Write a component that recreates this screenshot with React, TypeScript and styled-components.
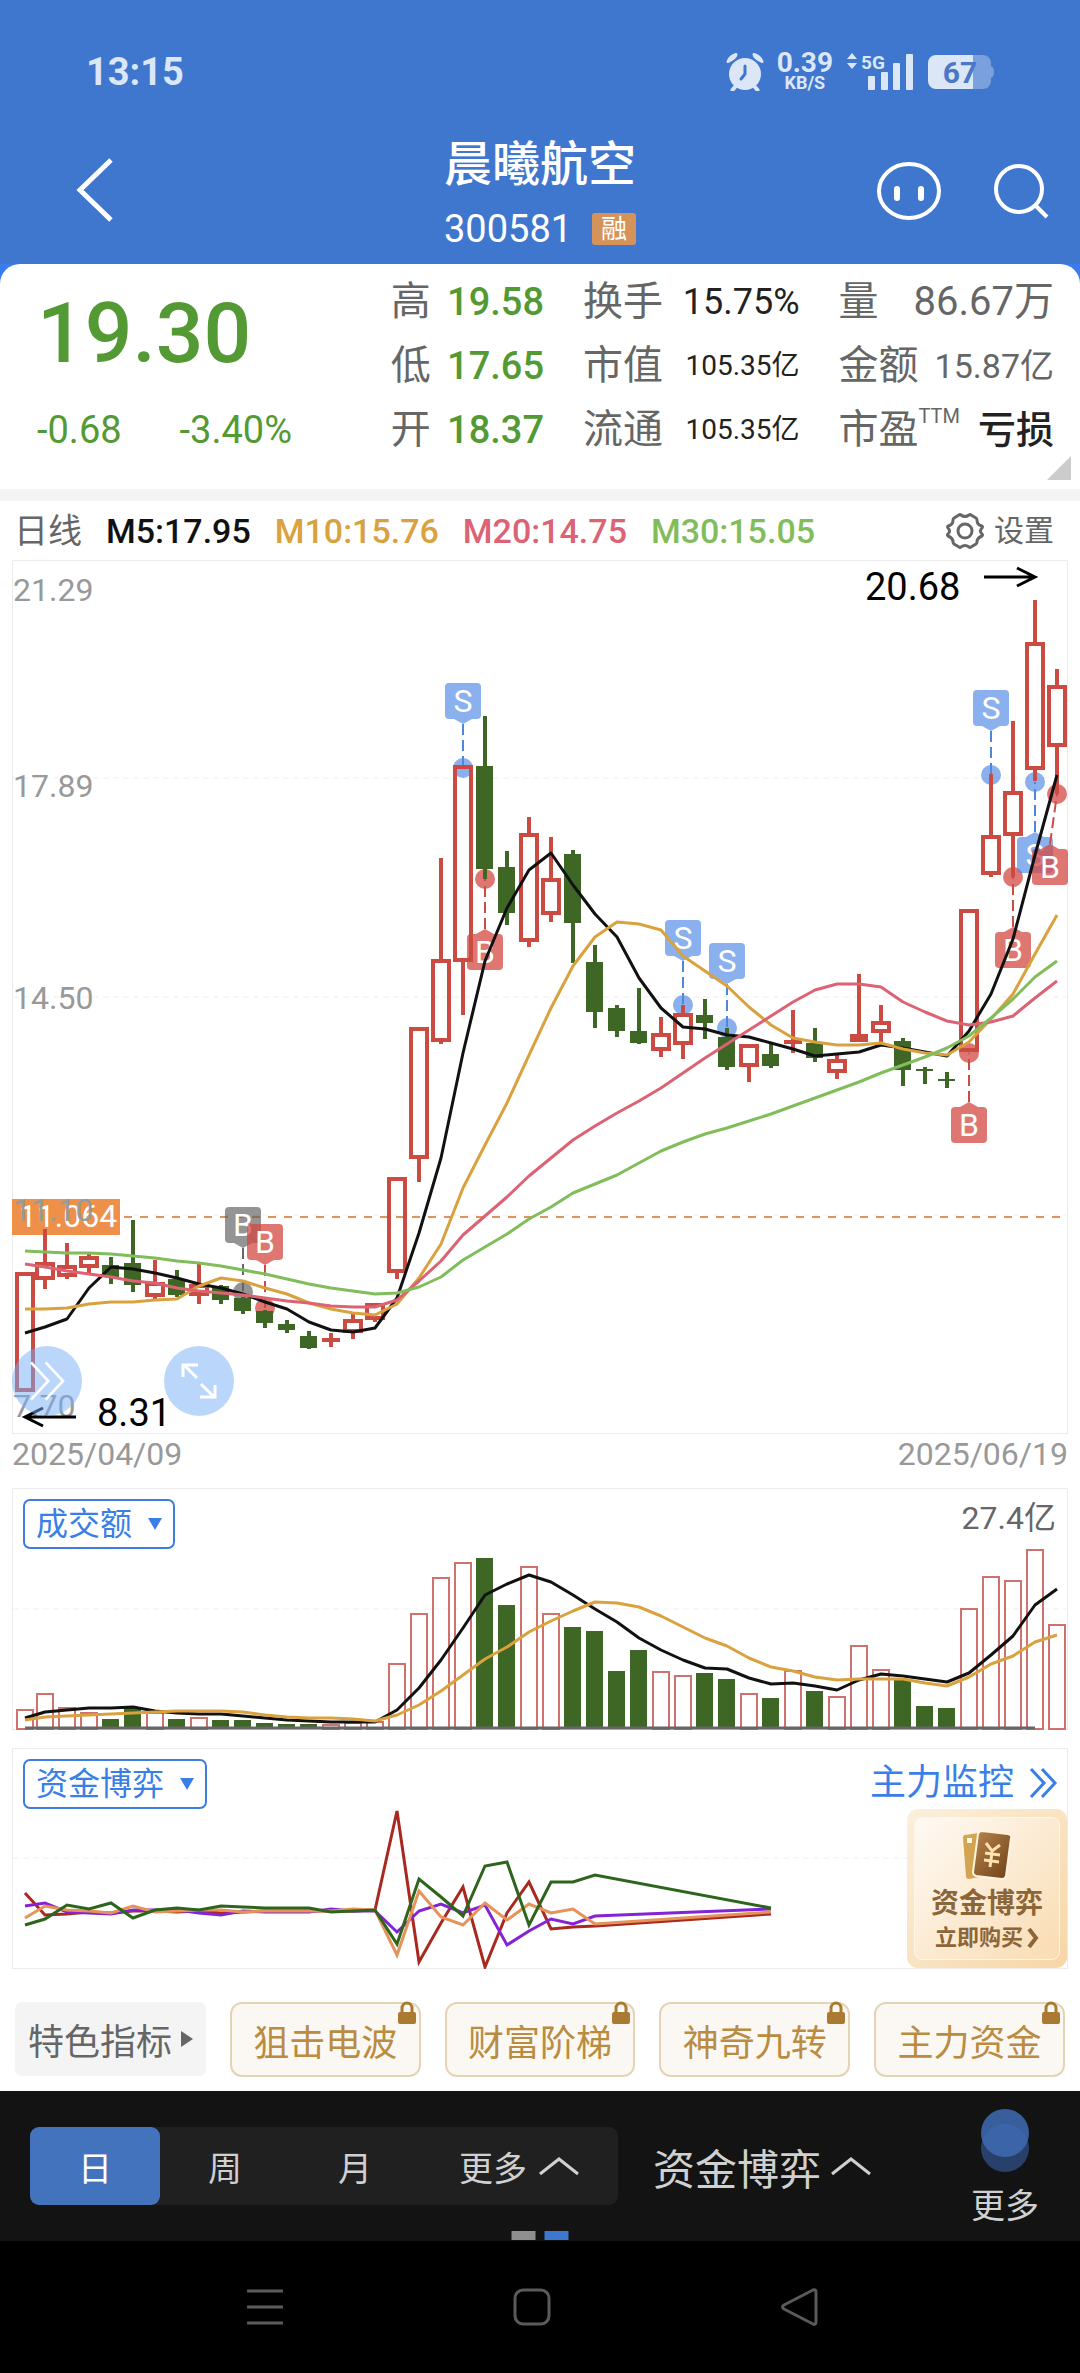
import React from "react";
import styled, { createGlobalStyle } from "styled-components";

const GlobalStyle = createGlobalStyle`
  *, *::before, *::after { box-sizing: border-box; }
  body {
    margin: 0;
    background: #000;
    font-family: Roboto, "Noto Sans CJK SC", sans-serif;
    -webkit-font-smoothing: antialiased;
  }
  button, select {
    font-family: inherit;
    margin: 0;
    padding: 0;
    border: 0;
    background: none;
    color: inherit;
    cursor: pointer;
  }
  dl, dd, dt, h1, p { margin: 0; font-weight: 400; }
  a { text-decoration: none; color: inherit; }
  svg { display: block; flex: none; }
`;

/* ---------- data ---------- */

type Candle = [kind: "R" | "G", high: number, top: number, bottom: number, low: number];

const candles: Candle[] = [
  ["R", 1272, 1272, 1392, 1392], ["R", 1229, 1262, 1280, 1289], ["R", 1243, 1265, 1277, 1279],
  ["R", 1254, 1256, 1268, 1274], ["G", 1257, 1265, 1277, 1284], ["G", 1220, 1263, 1285, 1292],
  ["R", 1260, 1282, 1297, 1299], ["G", 1270, 1279, 1295, 1297], ["R", 1264, 1284, 1296, 1304],
  ["G", 1285, 1286, 1300, 1304], ["G", 1297, 1298, 1311, 1314], ["G", 1310, 1311, 1323, 1328],
  ["G", 1320, 1324, 1330, 1333], ["G", 1331, 1336, 1348, 1349], ["R", 1333, 1338, 1342, 1347],
  ["R", 1313, 1319, 1333, 1339], ["R", 1303, 1303, 1320, 1322], ["R", 1177, 1177, 1273, 1279],
  ["R", 1027, 1027, 1159, 1182], ["R", 858, 959, 1042, 1044], ["R", 765, 765, 962, 1015],
  ["G", 716, 766, 869, 879], ["G", 851, 867, 913, 925], ["R", 817, 833, 942, 947],
  ["R", 837, 878, 915, 922], ["G", 850, 854, 923, 963], ["G", 945, 962, 1012, 1028],
  ["G", 1005, 1008, 1031, 1037], ["G", 988, 1031, 1043, 1044], ["R", 1017, 1033, 1051, 1057],
  ["R", 1005, 1013, 1045, 1059], ["G", 999, 1015, 1023, 1039], ["G", 1028, 1037, 1067, 1070],
  ["R", 1044, 1044, 1067, 1082], ["G", 1044, 1054, 1066, 1068], ["R", 1010, 1040, 1044, 1053],
  ["G", 1028, 1043, 1058, 1062], ["R", 1053, 1059, 1073, 1079], ["R", 974, 1034, 1042, 1042],
  ["R", 1005, 1021, 1033, 1042], ["G", 1038, 1041, 1070, 1086], ["G", 1067, 1069, 1071, 1084],
  ["G", 1072, 1079, 1081, 1088], ["R", 909, 909, 1052, 1052], ["R", 774, 835, 875, 877],
  ["R", 721, 791, 836, 877], ["R", 600, 642, 770, 781], ["R", 669, 685, 747, 794],
];

const ma5 = [1333, 1327, 1319, 1288, 1267, 1269, 1273, 1278, 1284, 1288, 1294, 1302, 1309, 1322, 1330, 1332, 1328, 1298, 1233, 1158, 1053, 961, 908, 870, 853, 885, 914, 937, 978, 1008, 1027, 1029, 1035, 1037, 1043, 1049, 1056, 1054, 1052, 1045, 1048, 1052, 1056, 1031, 994, 939, 855, 775];
const ma10 = [1309, 1309, 1308, 1304, 1302, 1302, 1300, 1299, 1286, 1278, 1281, 1288, 1294, 1303, 1309, 1313, 1315, 1304, 1278, 1244, 1188, 1145, 1103, 1055, 1008, 966, 937, 922, 924, 930, 956, 971, 986, 1007, 1025, 1038, 1042, 1045, 1045, 1043, 1049, 1053, 1055, 1042, 1019, 994, 954, 915];
const ma20 = [1264, 1267, 1271, 1274, 1277, 1281, 1283, 1288, 1291, 1293, 1295, 1298, 1301, 1303, 1306, 1307, 1307, 1300, 1281, 1261, 1235, 1216, 1197, 1176, 1158, 1140, 1126, 1113, 1101, 1088, 1073, 1058, 1044, 1030, 1016, 1002, 990, 984, 984, 987, 1002, 1012, 1021, 1025, 1022, 1016, 998, 981];
const ma30 = [1251, 1252, 1253, 1253, 1254, 1256, 1258, 1261, 1263, 1266, 1270, 1274, 1279, 1284, 1288, 1291, 1294, 1293, 1287, 1277, 1260, 1247, 1234, 1219, 1207, 1193, 1184, 1175, 1163, 1151, 1142, 1134, 1128, 1121, 1114, 1106, 1098, 1090, 1082, 1073, 1065, 1057, 1048, 1036, 1018, 999, 977, 961];

const turnover = [1709, 1693, 1707, 1712, 1719, 1707, 1712, 1719, 1717, 1720, 1720, 1723, 1724, 1724, 1724, 1722, 1721, 1663, 1613, 1577, 1562, 1558, 1605, 1566, 1613, 1627, 1631, 1671, 1650, 1671, 1675, 1673, 1679, 1693, 1698, 1670, 1691, 1696, 1645, 1669, 1679, 1706, 1708, 1608, 1576, 1580, 1549, 1624];
const turnover5 = [1718, 1712, 1710, 1708, 1708, 1707, 1711, 1713, 1714, 1714, 1716, 1718, 1720, 1721, 1722, 1722, 1722, 1710, 1688, 1660, 1628, 1595, 1584, 1575, 1582, 1595, 1609, 1622, 1638, 1650, 1660, 1668, 1669, 1678, 1684, 1683, 1686, 1690, 1680, 1674, 1676, 1679, 1682, 1673, 1655, 1636, 1605, 1589];
const turnover10 = [1720, 1717, 1716, 1715, 1714, 1713, 1712, 1711, 1711, 1711, 1712, 1715, 1717, 1718, 1718, 1719, 1721, 1715, 1705, 1691, 1675, 1659, 1647, 1632, 1621, 1611, 1602, 1603, 1607, 1616, 1627, 1638, 1646, 1658, 1667, 1671, 1677, 1680, 1679, 1679, 1679, 1683, 1686, 1677, 1664, 1656, 1642, 1635];

const fundLines = [
  { color: "#a9281f", end: 1914, ys: [1893, 1915, 1914, 1912, 1913, 1911, 1911, 1912, 1911, 1913, 1912, 1911, 1911, 1911, 1911, 1911, 1910, 1811, 1962, 1923, 1887, 1967, 1913, 1882, 1929, 1927, 1926] },
  { color: "#8423d6", end: 1909, ys: [1906, 1903, 1912, 1913, 1914, 1910, 1910, 1910, 1913, 1915, 1911, 1912, 1912, 1912, 1909, 1911, 1911, 1932, 1911, 1904, 1913, 1905, 1945, 1931, 1919, 1924, 1916] },
  { color: "#e6935a", end: 1912, ys: [1918, 1906, 1910, 1911, 1913, 1906, 1912, 1911, 1910, 1910, 1912, 1911, 1911, 1911, 1911, 1909, 1910, 1955, 1891, 1917, 1925, 1903, 1920, 1904, 1913, 1909, 1924] },
  { color: "#2d651d", end: 1908, ys: [1925, 1919, 1905, 1909, 1903, 1918, 1910, 1908, 1910, 1906, 1907, 1908, 1908, 1908, 1912, 1911, 1910, 1944, 1879, 1897, 1916, 1866, 1862, 1925, 1882, 1882, 1875] },
];

type Mark = { letter: "S" | "B"; tone: "blue" | "red" | "grey"; x: number; dot: number; box: number; boxX?: number };

const marks: Mark[] = [
  { letter: "S", tone: "blue", x: 463, dot: 768, box: 683 },
  { letter: "B", tone: "red", x: 485, dot: 879, box: 934 },
  { letter: "S", tone: "blue", x: 683, dot: 1005, box: 920 },
  { letter: "S", tone: "blue", x: 727, dot: 1028, box: 943 },
  { letter: "S", tone: "blue", x: 991, dot: 775, box: 690 },
  { letter: "B", tone: "red", x: 969, dot: 1053, box: 1107 },
  { letter: "B", tone: "red", x: 1013, dot: 877, box: 932 },
  { letter: "S", tone: "blue", x: 1035, dot: 782, box: 837 },
  { letter: "B", tone: "red", x: 1057, dot: 794, box: 849, boxX: 1050 },
  { letter: "B", tone: "grey", x: 243, dot: 1292, box: 1207 },
  { letter: "B", tone: "red", x: 265, dot: 1308, box: 1224 },
];

const toneFill = {
  blue: "rgba(76,134,228,.65)",
  red: "rgba(211,72,65,.75)",
  grey: "rgba(90,90,90,.65)",
};
const toneLine = { blue: "#4f88da", red: "#cd4b43", grey: "#666" };

const RED = "#cb4a42";
const GREEN = "#3e6624";

const xAt = (i: number) => (i === 0 ? 25 : 23 + 22 * i);
const points = (ys: number[]) => ys.map((y, i) => `${xAt(i)},${y}`).join(" ");

/* ---------- header ---------- */

const Page = styled.div`
  min-width: 720px;
  background: #fff;
`;

const Header = styled.header`
  background: #3f76ce;
  color: #fff;
`;

const StatusBar = styled.div`
  display: flex;
  align-items: center;
  justify-content: space-between;
  height: 96px;
  padding: 48px 85px 0 86px;
  color: #dbe6f7;
`;

const Clock = styled.time`
  font-size: 38px;
  line-height: 48px;
  font-weight: 700;
`;

const StatusIcons = styled.div`
  display: flex;
  align-items: center;
  gap: 13px;
`;

const NetSpeed = styled.div`
  display: grid;
  justify-items: center;
  font-weight: 700;
`;

const NetValue = styled.span`
  font-size: 28px;
  line-height: 22px;
`;

const NetUnit = styled.span`
  font-size: 18px;
  line-height: 18px;
`;

const TopBar = styled.div`
  display: grid;
  grid-template-columns: 1fr auto 1fr;
  align-items: center;
  height: 168px;
  padding: 20px 30px 0 72px;
`;

const IconButton = styled.button`
  display: flex;
  align-items: center;
  justify-content: center;
  width: fit-content;
`;

const TitleBlock = styled.div`
  display: flex;
  flex-direction: column;
  gap: 18px;
  padding: 8px 42px 0 0;
`;

const Title = styled.h1`
  font-size: 48px;
  line-height: 52px;
  font-weight: 500;
  white-space: nowrap;
`;

const CodeLine = styled.div`
  display: flex;
  align-items: center;
  justify-content: space-between;
  font-size: 38px;
  line-height: 40px;
`;

const MarginTag = styled.span`
  width: 44px;
  border-radius: 3px;
  background: #d59359;
  font-size: 26px;
  line-height: 32px;
  text-align: center;
`;

const TopActions = styled.div`
  display: flex;
  justify-content: flex-end;
  align-items: center;
  gap: 50px;
`;

/* ---------- quote ---------- */

const SheetEdge = styled.div`
  background: #3a7cf0;
`;

const Quote = styled.section`
  position: relative;
  display: grid;
  grid-template-columns: 351fr 153fr 216fr 215fr;
  column-gap: 39px;
  padding: 6px 26px 27px 0;
  border-radius: 20px 20px 0 0;
  background: #fff;
`;

const PriceBox = styled.div`
  padding-left: 37px;
  color: #539a34;
`;

const Price = styled.p`
  font-size: 84px;
  line-height: 128px;
  font-weight: 500;
`;

const Change = styled.p`
  display: flex;
  gap: 58px;
  font-size: 38px;
  line-height: 64px;
`;

const Stats = styled.dl`
  display: grid;
  grid-auto-rows: 64px;
`;

const Stat = styled.div`
  display: flex;
  align-items: center;
  justify-content: space-between;
  white-space: nowrap;
`;

const StatName = styled.dt`
  display: flex;
  font-size: 40px;
  line-height: 64px;
  color: #666;
`;

const Sup = styled.span`
  font-size: 20px;
  line-height: 36px;
`;

const StatValue = styled.dd<{ $tone?: string; $size?: number; $bold?: boolean }>`
  font-size: ${(p) => p.$size ?? 38}px;
  line-height: 64px;
  font-weight: ${(p) => (p.$bold ? 500 : 400)};
  color: ${(p) => p.$tone ?? "#666"};
`;

const Corner = styled.span`
  position: absolute;
  right: 9px;
  bottom: 9px;
  border-style: solid;
  border-width: 0 0 24px 24px;
  border-color: transparent transparent #ccc transparent;
`;

/* ---------- charts ---------- */

const Legend = styled.div`
  display: flex;
  align-items: center;
  gap: 24px;
  height: 71px;
  padding: 0 26px 0 14px;
  border-top: 12px solid #f4f4f4;
  font-size: 34px;
  line-height: 58px;
  white-space: nowrap;
`;

const LegendItem = styled.span<{ $color: string; $plain?: boolean }>`
  color: ${(p) => p.$color};
  font-weight: ${(p) => (p.$plain ? 400 : 500)};
`;

const Settings = styled.button`
  display: flex;
  align-items: center;
  gap: 10px;
  margin-left: auto;
  font-size: 30px;
  line-height: 58px;
  color: #666;
`;

const ChartBox = styled.section<{ $after?: number }>`
  position: relative;
  margin-bottom: ${(p) => p.$after ?? 0}px;

  > svg {
    width: 100%;
    height: auto;
  }
`;

const RoundButton = styled.button<{ $left: string }>`
  position: absolute;
  left: ${(p) => p.$left};
  bottom: 18px;
  display: flex;
  align-items: center;
  justify-content: center;
  width: 70px;
  height: 70px;
  border-radius: 50%;
  background: rgba(118, 175, 247, 0.5);
`;

const Dates = styled.div`
  display: flex;
  justify-content: space-between;
  height: 54px;
  padding: 0 12px;
  font-size: 32px;
  line-height: 40px;
  color: #999;
`;

const Picker = styled.label`
  position: absolute;
  left: 23px;
  top: 11px;
  display: block;

  select {
    appearance: none;
    height: 50px;
    padding: 0 40px 0 11px;
    border: 2px solid #3d7ce0;
    border-radius: 7px;
    font-size: 32px;
    line-height: 46px;
    color: #3a7fe8;
  }

  &::after {
    content: "";
    position: absolute;
    right: 13px;
    top: 19px;
    border-style: solid;
    border-width: 12px 7px 0;
    border-color: #3a7fe8 transparent transparent;
    pointer-events: none;
  }
`;

const MaxTurnover = styled.span`
  position: absolute;
  right: 24px;
  top: 8px;
  font-size: 32px;
  line-height: 44px;
  color: #666;
`;

const MonitorLink = styled.a`
  position: absolute;
  right: 22px;
  top: 11px;
  display: flex;
  align-items: center;
  gap: 14px;
  font-size: 36px;
  line-height: 48px;
  color: #3a7fe8;
`;

const BuyCard = styled.a`
  position: absolute;
  right: 13px;
  bottom: 1px;
  display: flex;
  width: 160px;
  height: 159px;
  padding: 8px 7px;
  border-radius: 11px;
  background: linear-gradient(135deg, #fbf0dc, #f7d6a6);
`;

const BuyInner = styled.span`
  display: flex;
  flex: 1;
  flex-direction: column;
  align-items: center;
  padding-top: 12px;
  border: 1px solid #fff6e8;
  border-radius: 8px;
  background: linear-gradient(135deg, #fffaf4, #f9dcb2);
  color: #8c6538;
  font-weight: 700;
`;

const BuyName = styled.span`
  font-size: 28px;
  line-height: 48px;
`;

const BuyNow = styled.span`
  display: flex;
  align-items: center;
  gap: 4px;
  font-size: 22px;
  line-height: 20px;
`;

/* ---------- chips ---------- */

const Chips = styled.nav`
  display: grid;
  grid-template-columns: repeat(5, 1fr);
  gap: 24px;
  padding: 33px 15px 14px;
`;

const ChipLead = styled.button`
  display: flex;
  align-items: center;
  justify-content: center;
  gap: 9px;
  height: 74px;
  border-radius: 7px;
  background: #f4f4f4;
  font-size: 36px;
  white-space: nowrap;
  color: #666;
`;

const Chip = styled.button`
  position: relative;
  height: 75px;
  border: 2px solid #e5d4b4;
  border-radius: 12px;
  background: #fbf8f3;
  font-size: 36px;
  white-space: nowrap;
  color: #b98c41;

  svg {
    position: absolute;
    right: 3px;
    top: -3px;
  }
`;

/* ---------- bottom ---------- */

const BottomBar = styled.div`
  position: relative;
  display: flex;
  align-items: center;
  height: 150px;
  padding: 0 41px 0 30px;
  background: #131313;
  color: #d0d0d0;
`;

const Segments = styled.div`
  display: grid;
  grid-template-columns: 130fr 130fr 130fr 198fr;
  flex: 0 1 588px;
  height: 78px;
  border-radius: 9px;
  background: #202020;
`;

const Segment = styled.button<{ $active?: boolean }>`
  display: flex;
  align-items: center;
  justify-content: center;
  gap: 12px;
  border-radius: 9px;
  font-size: 34px;
  white-space: nowrap;
  background: ${(p) => (p.$active ? "#4273bc" : "none")};
  color: ${(p) => (p.$active ? "#fff" : "inherit")};
`;

const FundToggle = styled.button`
  display: flex;
  align-items: center;
  gap: 10px;
  margin-left: 35px;
  font-size: 42px;
  white-space: nowrap;
`;

const MoreButton = styled.button`
  display: flex;
  flex-direction: column;
  align-items: center;
  gap: 12px;
  margin-left: auto;
  padding-top: 4px;
  font-size: 34px;
  line-height: 44px;
`;

const Pager = styled.div`
  position: absolute;
  left: 50%;
  bottom: 1px;
  display: flex;
  gap: 9px;
  transform: translateX(-50%);
`;

const PagerDot = styled.span<{ $active?: boolean }>`
  width: 24px;
  height: 9px;
  background: ${(p) => (p.$active ? "#3d77ce" : "#8f8f8f")};
`;

const SystemNav = styled.nav`
  display: grid;
  grid-template-columns: repeat(3, 1fr);
  justify-items: center;
  align-items: center;
  height: 132px;
  padding: 0 147px 0 131px;
  background: #000;
`;

/* ---------- small drawings ---------- */

const AlarmIcon = () => (
  <svg width="38" height="38" viewBox="0 0 38 38">
    <circle cx="19" cy="21" r="16" fill="#dbe6f7" />
    <path d="M9 34l-2.500 3M29 34l2.500 3" stroke="#dbe6f7" strokeWidth="4" strokeLinecap="round" />
    <path d="M2 8.500q2-5 8-7q0 3-8 7zM36 8.500q-2-5-8-7q0 3 8 7z" stroke="#dbe6f7" strokeWidth="3" strokeLinejoin="round" fill="#dbe6f7" />
    <path d="M19 13v8l-4 5" stroke="#3f76ce" strokeWidth="3" strokeLinecap="round" strokeLinejoin="round" fill="none" />
  </svg>
);

const SignalIcon = () => (
  <svg width="68" height="44" viewBox="844 50 68 44" fill="#dbe6f7">
    <path d="M850 53l5 6h-10zM850 69l5-6h-10z" />
    <text x="859" y="69" fontSize="19" fontWeight="700">5G</text>
    <rect x="866" y="76" width="7" height="14" rx="1" />
    <rect x="879" y="72" width="7" height="18" rx="1" />
    <rect x="891" y="63" width="7" height="27" rx="1" />
    <rect x="904" y="54" width="7" height="36" rx="1" />
  </svg>
);

const BatteryIcon = () => (
  <svg width="68" height="38" viewBox="927 54 68 38">
    <path d="M973 56h10a8 8 0 0 1 8 8v3q3 1 3 6t-3 6v3a8 8 0 0 1-8 8h-10z" fill="#7ba0de" />
    <path d="M973 56v34h-37a8 8 0 0 1-8-8v-18a8 8 0 0 1 8-8z" fill="#dbe6f7" />
    <text x="960" y="84" fontSize="30" fontWeight="700" textAnchor="middle" fill="#4a78c8">67</text>
  </svg>
);

const Caret = () => (
  <svg width="40" height="20" viewBox="0 0 40 20" fill="none" stroke="currentColor" strokeWidth="3">
    <path d="M1 18L20 3l19 15" />
  </svg>
);

const GearIcon = () => (
  <svg width="38" height="38" viewBox="0 0 38 38" fill="none" stroke="#666" strokeWidth="3" strokeLinejoin="round">
    <path d="M13 3q1-1 2 0q4 3 8 0q1-1 2 0l5 3q1 1 1 2q0 5 5 6q1 1 0 2q-3 3 0 6q1 1 0 2q-5 2-5 6q0 1-1 2l-5 3q-1 1-2 0q-4-3-8 0q-1 1-2 0l-5-3q-1-1-1-2q0-4-5-6q-1-1 0-2q3-3 0-6q-1-1 0-2q5-1 5-6q0-1 1-2z" />
    <circle cx="19" cy="19" r="7" />
  </svg>
);

const LockIcon = () => (
  <svg width="18" height="24" viewBox="0 0 18 24">
    <path d="M4 12V7a5 5 0 0 1 10 0v5" fill="none" stroke="#aa7a33" strokeWidth="3" />
    <rect y="11" width="18" height="12" rx="2" fill="#aa7a33" />
  </svg>
);

const VoucherIcon = () => (
  <svg width="50" height="50" viewBox="0 0 50 50">
    <defs>
      <linearGradient id="card" x1="0" y1="0" x2="1" y2="1">
        <stop offset="0" stopColor="#b98650" />
        <stop offset="1" stopColor="#6c3f15" />
      </linearGradient>
    </defs>
    <path d="M3 5l14-2v44l-10 2q-3 0-3-3L1 8q0-3 2-3z" fill="#d3a552" />
    <rect x="5" y="8" width="5" height="5" fill="#fff8ec" />
    <path d="M20 1l26 3q4 1 3 4l-5 38q-1 3-4 3l-26-3q-3-1-3-4l5-38q1-3 4-3z" fill="url(#card)" stroke="#fff3e0" strokeWidth="2" />
    <path d="M24 13l6 8 8-6M23 23l15 2M22 30l15 2M30 22l-2 15" fill="none" stroke="#ffe3ae" strokeWidth="3" />
  </svg>
);

const Chevrons = ({ size, width, color }: { size: number; width: number; color: string }) => (
  <svg width={size} height={size} viewBox="0 0 30 30" fill="none" stroke={color} strokeWidth={width}>
    <path d="M3 1l13 14L3 29M14 1l13 14L14 29" />
  </svg>
);

/* ---------- chart parts ---------- */

const TradeMark = ({ letter, tone, x, dot, box, boxX = x }: Mark) => {
  const above = box < dot;
  const edge = above ? box + 36 : box;
  const tip = above ? edge + 5 : edge - 5;
  return (
    <g>
      <circle cx={x} cy={dot} r="10" fill={toneFill[tone]} />
      <line x1={boxX} y1={tip} x2={x} y2={dot} stroke={toneLine[tone]} strokeWidth="2" strokeDasharray="11 5" />
      <rect x={boxX - 18} y={box} width="36" height="36" rx="4" fill={toneFill[tone]} />
      <path d={`M${boxX - 9} ${edge}L${boxX} ${tip}L${boxX + 9} ${edge}z`} fill={toneFill[tone]} />
      <text x={boxX} y={box + 29} fontSize="32" textAnchor="middle" fill="#fff">{letter}</text>
    </g>
  );
};

const CandleShape = ({ index }: { index: number }) => {
  const [kind, high, top, bottom, low] = candles[index];
  const x = xAt(index);
  if (kind === "G") {
    return (
      <g fill={GREEN}>
        <rect x={x - 2} y={high} width="4" height={low - high} />
        <rect x={x - 9} y={top} width="17" height={bottom - top} />
      </g>
    );
  }
  const height = bottom - top;
  return (
    <g>
      <rect x={x - 2} y={high} width="4" height={top - high} fill={RED} />
      <rect x={x - 2} y={bottom} width="4" height={low - bottom} fill={RED} />
      {height < 9 ? (
        <rect x={x - 9} y={top} width="18" height={height} fill={RED} />
      ) : (
        <rect x={x - 8} y={top + 2} width="16" height={height - 4} fill="none" stroke={RED} strokeWidth="4" />
      )}
    </g>
  );
};

const Line = ({ ys, color }: { ys: number[]; color: string }) => (
  <polyline points={points(ys)} fill="none" stroke={color} strokeWidth="3" strokeLinejoin="round" />
);

const GridLine = ({ y }: { y: number }) => (
  <line x1="13" x2="1066" y1={y} y2={y} stroke="#efefef" strokeWidth="1" strokeDasharray="6 4" />
);

const priceScale: [string, number][] = [["21.29", 601], ["17.89", 797], ["14.50", 1009], ["11.10", 1221], ["7.70", 1417]];

const PriceChart = () => (
  <svg viewBox="0 560 1080 874" role="img" aria-label="日线">
    <rect x="12.500" y="560.500" width="1055" height="873" fill="none" stroke="#ebebeb" />
    <GridLine y={778} />
    <GridLine y={997} />
    <GridLine y={1215} />
    <line x1="124" x2="1062" y1="1217" y2="1217" stroke="#e0935a" strokeWidth="2" strokeDasharray="8 8" />
    <rect x="12" y="1199" width="108" height="36" fill="#ee904a" />
    <text x="68" y="1227" fontSize="32" textAnchor="middle" fill="#fff">11.064</text>
    {priceScale.map(([label, y]) => (
      <text key={label} x="13" y={y} fontSize="32" fill="#999">{label}</text>
    ))}
    {marks.map((m) => <TradeMark key={`${m.x}-${m.box}`} {...m} />)}
    {candles.map((_, i) => <CandleShape key={i} index={i} />)}
    <Line ys={ma5} color="#111" />
    <Line ys={ma10} color="#d9a23f" />
    <Line ys={ma20} color="#db6374" />
    <Line ys={ma30} color="#81bd5b" />
    <g fill="none" stroke="#000" strokeWidth="3">
      <path d="M984 577h50M1017 568l18 9l-18 9" />
      <path d="M76 1417h-50M43 1408l-18 9l18 9" />
    </g>
    <text x="865" y="600" fontSize="38" fill="#000">20.68</text>
    <text x="97" y="1426" fontSize="38" fill="#000">8.31</text>
  </svg>
);

const TurnoverChart = () => (
  <svg viewBox="0 1488 1080 242" role="img" aria-label="成交额">
    <rect x="12.500" y="1488.500" width="1055" height="241" fill="none" stroke="#ebebeb" />
    <GridLine y={1609} />
    {turnover.map((y, i) =>
      candles[i][0] === "G" ? (
        <rect key={i} x={xAt(i) - 9} y={y} width="17" height={1729 - y} fill={GREEN} />
      ) : (
        <rect key={i} x={xAt(i) - 8} y={y + 1} width="16" height={1728 - y} fill="none" stroke="#cf726d" strokeWidth="2" />
      )
    )}
    <line x1="25" x2="1035" y1="1728" y2="1728" stroke="#666" strokeWidth="3" />
    <Line ys={turnover5} color="#111" />
    <Line ys={turnover10} color="#d9a23f" />
  </svg>
);

const FundChart = () => (
  <svg viewBox="0 1748 1080 221" role="img" aria-label="资金博弈">
    <rect x="12.500" y="1748.500" width="1055" height="220" fill="none" stroke="#ebebeb" />
    <GridLine y={1858} />
    {fundLines.map(({ color, ys, end }) => (
      <polyline key={color} points={`${points(ys)} 771,${end}`} fill="none" stroke={color} strokeWidth="3" />
    ))}
  </svg>
);

/* ---------- page ---------- */

export default function App() {
  return (
    <Page>
      <GlobalStyle />
      <Header>
        <StatusBar>
          <Clock>13:15</Clock>
          <StatusIcons>
            <AlarmIcon />
            <NetSpeed>
              <NetValue>0.39</NetValue>
              <NetUnit>KB/S</NetUnit>
            </NetSpeed>
            <SignalIcon />
            <BatteryIcon />
          </StatusIcons>
        </StatusBar>
        <TopBar>
          <IconButton aria-label="返回">
            <svg width="42" height="66" viewBox="0 0 42 66" fill="none" stroke="#fff" strokeWidth="5">
              <path d="M39 3L8 33l31 30" />
            </svg>
          </IconButton>
          <TitleBlock>
            <Title>晨曦航空</Title>
            <CodeLine>
              300581
              <MarginTag>融</MarginTag>
            </CodeLine>
          </TitleBlock>
          <TopActions>
            <IconButton aria-label="助手">
              <svg width="66" height="60" viewBox="0 0 66 60" fill="none" stroke="#fff">
                <ellipse cx="33" cy="31" rx="30" ry="27" strokeWidth="4" />
                <path d="M21 29v9M45 29v9" strokeWidth="6" strokeLinecap="round" />
              </svg>
            </IconButton>
            <IconButton aria-label="搜索">
              <svg width="58" height="58" viewBox="0 0 58 58" fill="none" stroke="#fff" strokeWidth="4">
                <circle cx="27" cy="28" r="23" />
                <path d="M43 44l12 12" />
              </svg>
            </IconButton>
          </TopActions>
        </TopBar>
      </Header>

      <SheetEdge>
        <Quote>
          <PriceBox>
            <Price>19.30</Price>
            <Change>
              <span>-0.68</span>
              <span>-3.40%</span>
            </Change>
          </PriceBox>
          <Stats>
            <Stat><StatName>高</StatName><StatValue $tone="#539a34" $bold>19.58</StatValue></Stat>
            <Stat><StatName>低</StatName><StatValue $tone="#539a34" $bold>17.65</StatValue></Stat>
            <Stat><StatName>开</StatName><StatValue $tone="#539a34" $bold>18.37</StatValue></Stat>
          </Stats>
          <Stats>
            <Stat><StatName>换手</StatName><StatValue $tone="#222" $size={36}>15.75%</StatValue></Stat>
            <Stat><StatName>市值</StatName><StatValue $tone="#222" $size={28}>105.35亿</StatValue></Stat>
            <Stat><StatName>流通</StatName><StatValue $tone="#222" $size={28}>105.35亿</StatValue></Stat>
          </Stats>
          <Stats>
            <Stat><StatName>量</StatName><StatValue $size={40}>86.67万</StatValue></Stat>
            <Stat><StatName>金额</StatName><StatValue $size={34}>15.87亿</StatValue></Stat>
            <Stat><StatName>市盈<Sup>TTM</Sup></StatName><StatValue $tone="#222" $bold>亏损</StatValue></Stat>
          </Stats>
          <Corner />
        </Quote>
      </SheetEdge>

      <Legend>
        <LegendItem $color="#666" $plain>日线</LegendItem>
        <LegendItem $color="#111">M5:17.95</LegendItem>
        <LegendItem $color="#d9a23f">M10:15.76</LegendItem>
        <LegendItem $color="#db6374">M20:14.75</LegendItem>
        <LegendItem $color="#81bd5b">M30:15.05</LegendItem>
        <Settings>
          <GearIcon />
          设置
        </Settings>
      </Legend>

      <ChartBox>
        <PriceChart />
        <RoundButton $left="12px" aria-label="展开">
          <Chevrons size={40} width={2} color="#fff" />
        </RoundButton>
        <RoundButton $left="164px" aria-label="全屏">
          <svg width="36" height="38" viewBox="0 0 36 38" fill="none" stroke="#fff" strokeWidth="3">
            <path d="M2 15V3h15M3 3l13 13M34 23v12H19M33 35L20 22" />
          </svg>
        </RoundButton>
      </ChartBox>
      <Dates>
        <time>2025/04/09</time>
        <time>2025/06/19</time>
      </Dates>

      <ChartBox $after={18}>
        <TurnoverChart />
        <Picker>
          <select aria-label="成交额"><option>成交额</option></select>
        </Picker>
        <MaxTurnover>27.4亿</MaxTurnover>
      </ChartBox>

      <ChartBox>
        <FundChart />
        <Picker>
          <select aria-label="资金博弈"><option>资金博弈</option></select>
        </Picker>
        <MonitorLink href="#monitor">
          主力监控
          <Chevrons size={30} width={3} color="#3a7fe8" />
        </MonitorLink>
        <BuyCard href="#buy">
          <BuyInner>
            <VoucherIcon />
            <BuyName>资金博弈</BuyName>
            <BuyNow>
              立即购买
              <svg width="12" height="20" viewBox="0 0 12 20" fill="none" stroke="#8c6538" strokeWidth="4">
                <path d="M2 1l7 9-7 9" />
              </svg>
            </BuyNow>
          </BuyInner>
        </BuyCard>
      </ChartBox>

      <Chips>
        <ChipLead>
          特色指标
          <svg width="12" height="16" viewBox="0 0 12 16" fill="#666"><path d="M0 0l12 8-12 8z" /></svg>
        </ChipLead>
        {["狙击电波", "财富阶梯", "神奇九转", "主力资金"].map((name) => (
          <Chip key={name}>
            {name}
            <LockIcon />
          </Chip>
        ))}
      </Chips>

      <BottomBar>
        <Segments>
          <Segment $active>日</Segment>
          <Segment>周</Segment>
          <Segment>月</Segment>
          <Segment>更多<Caret /></Segment>
        </Segments>
        <FundToggle>资金博弈<Caret /></FundToggle>
        <MoreButton>
          <svg width="50" height="64" viewBox="0 0 50 64">
            <circle cx="25" cy="40" r="24" fill="#29416a" />
            <circle cx="25" cy="25" r="24" fill="#3f6cb4" fillOpacity=".85" />
          </svg>
          更多
        </MoreButton>
        <Pager>
          <PagerDot />
          <PagerDot $active />
        </Pager>
      </BottomBar>

      <SystemNav>
        <IconButton aria-label="菜单">
          <svg width="36" height="38" viewBox="0 0 36 38" stroke="#5a5a5a" strokeWidth="3">
            <path d="M0 3h36M0 19h36M0 35h36" />
          </svg>
        </IconButton>
        <IconButton aria-label="主页">
          <svg width="38" height="38" viewBox="0 0 38 38" fill="none" stroke="#5a5a5a" strokeWidth="3">
            <rect x="2" y="2" width="34" height="34" rx="8" />
          </svg>
        </IconButton>
        <IconButton aria-label="后退">
          <svg width="38" height="38" viewBox="0 0 38 38" fill="none" stroke="#5a5a5a" strokeWidth="3" strokeLinejoin="round">
            <path d="M33 2q3-1 3 2v30q0 3-3 2L4 21q-3-2 0-4z" />
          </svg>
        </IconButton>
      </SystemNav>
    </Page>
  );
}
